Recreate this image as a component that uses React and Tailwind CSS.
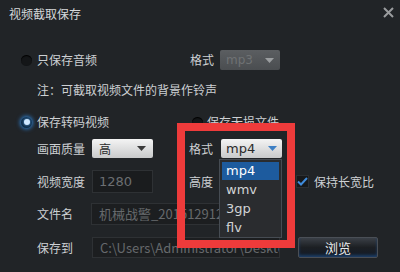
import React from 'react';

const cjk = { fontFamily: '"Noto Sans CJK SC", "Noto Sans", sans-serif' };

const Radio = ({ checked }) =>
  checked ? (
    <span className="flex h-[11px] w-[11px] items-center justify-center rounded-full bg-[#0d2a44] shadow-[0_0_4px_1px_#2f7fd0]">
      <span className="h-[6px] w-[6px] rounded-full bg-[#cfe8ff] shadow-[0_0_3px_#6fb8ff]" />
    </span>
  ) : (
    <span className="h-[11px] w-[11px] rounded-full bg-[#141618] shadow-[inset_0_1px_1px_#000]" />
  );

const Caret = ({ color }) => (
  <svg width="9" height="5" viewBox="0 0 9 5">
    <path d="M0 0h9L4.5 5z" fill={color} />
  </svg>
);

const App = () => {
  const formats = ['mp4', 'wmv', '3gp', 'flv'];

  return (
    <div
      className="relative h-[272px] w-[400px] overflow-hidden bg-[#212427] text-[12px] leading-[16px] text-[#cdd0d3]"
      style={cjk}
    >
      {/* title bar */}
      <div className="flex h-[28px] items-start justify-between pl-[9px] pr-[6px] pt-[6px]">
        <span className="text-[#d6d8da]">视频截取保存</span>
        <svg width="11" height="11" viewBox="0 0 11 11" className="mt-[1px]">
          <path d="M1 1l9 9M10 1l-9 9" stroke="#9a9c9e" strokeWidth="2" />
        </svg>
      </div>

      {/* audio only */}
      <div className="mt-[22px] flex h-[20px] items-center pl-[21px]">
        <div className="flex w-[169px] items-center gap-[5px]">
          <Radio />
          <span>只保存音频</span>
        </div>
        <span className="w-[30px]">格式</span>
        <div className="flex h-[20px] w-[60px] items-center justify-between rounded-[2px] bg-gradient-to-b from-[#5b5e61] to-[#4a4d50] px-[6px] text-[#6f7274]">
          <span style={{ fontFamily: '"DejaVu Sans", sans-serif' }}>mp3</span>
          <Caret color="#9b9ea0" />
        </div>
      </div>

      <div className="mt-[12px] h-[16px] pl-[37px]">注：可截取视频文件的背景作铃声</div>

      {/* transcode / lossless */}
      <div className="mt-[16px] flex h-[16px] items-center pl-[21px]">
        <div className="flex w-[171px] items-center gap-[5px]">
          <Radio checked />
          <span>保存转码视频</span>
        </div>
        <div className="flex items-center gap-[4px]">
          <Radio />
          <span>保存无损文件</span>
        </div>
      </div>

      {/* form rows */}
      <div className="mt-[9px] flex flex-col pl-[37px]">
        <div className="flex h-[19px] items-center">
          <span className="w-[55px]">画面质量</span>
          <div className="flex h-[19px] w-[61px] items-center justify-between rounded-[2px] bg-gradient-to-b from-[#f4f4f4] to-[#c9cacb] px-[7px] text-[#2a2a2a]">
            <span>高</span>
            <Caret color="#3a3a3a" />
          </div>
          <span className="ml-[36px] w-[32px]">格式</span>
          <div className="flex h-[19px] w-[61px] items-center justify-between rounded-[2px] bg-gradient-to-b from-[#f4f4f4] to-[#c9cacb] px-[5px] text-[#2a2a2a]">
            <span className="text-[13px]" style={{ fontFamily: '"DejaVu Sans", sans-serif' }}>
              mp4
            </span>
            <Caret color="#3d7fc4" />
          </div>
        </div>

        <div className="mt-[12px] flex h-[23px] items-center">
          <span className="w-[55px]">视频宽度</span>
          <div className="flex h-[23px] w-[61px] items-center border border-[#2e3134] bg-[#1a1c1e] px-[6px] text-[13px] text-[#6c6f72]" style={{ fontFamily: '"DejaVu Sans", sans-serif' }}>
            1280
          </div>
          <span className="ml-[36px] w-[32px]">高度</span>
          <div className="h-[23px] w-[61px] border border-[#2e3134] bg-[#1a1c1e]" />
          <div className="ml-[14px] flex items-center gap-[5px]">
            <span className="flex h-[13px] w-[13px] items-center justify-center bg-[#17191b] shadow-[inset_0_0_0_1px_#2c2f32]">
              <svg width="11" height="9" viewBox="0 0 11 9">
                <path d="M1 4.5l3 3L10 1" stroke="#3f8bdb" strokeWidth="2" fill="none" />
              </svg>
            </span>
            <span>保持长宽比</span>
          </div>
        </div>

        <div className="mt-[10px] flex h-[22px] items-center">
          <span className="w-[54px]">文件名</span>
          <div className="flex h-[22px] w-[189px] items-center overflow-hidden whitespace-nowrap border border-[#2e3134] bg-[#1c1e20] px-[7px] text-[13px] text-[#66696c]">
            机械战警_20151291211
          </div>
        </div>

        <div className="mt-[12px] flex h-[21px] items-center">
          <span className="w-[55px]">保存到</span>
          <div className="flex h-[21px] w-[188px] items-center overflow-hidden whitespace-nowrap border border-[#2e3134] bg-[#1c1e20] px-[7px] text-[13px] text-[#66696c]">
            C:\Users\Administrator\Desktop
          </div>
          <button className="ml-[18px] flex h-[21px] w-[80px] items-center justify-center rounded-[2px] border border-[#4a4f56] bg-gradient-to-b from-[#3b4047] via-[#1c1f23] to-[#111a27] text-[13px] text-[#e8eaec] shadow-[inset_0_-2px_3px_#1d3e66]">
            浏览
          </button>
        </div>
      </div>

      {/* open format list */}
      <div className="absolute left-[219px] top-[159px] flex h-[79px] w-[63px] flex-col border border-[#464c53] bg-[#2a2c2f] pt-[2px] text-[13px] leading-[18px]" style={{ fontFamily: '"DejaVu Sans", sans-serif' }}>
        {formats.map((f, i) => (
          <div
            key={f}
            className={
              i === 0
                ? 'mx-[2px] h-[18px] bg-[#1d5b9e] px-[4px] text-white'
                : 'mx-[2px] h-[19px] px-[4px] pt-[1px] text-[#d2d4d6]'
            }
          >
            {f}
          </div>
        ))}
      </div>

      {/* red highlight annotation */}
      <div className="absolute left-[177px] top-[123px] h-[125px] w-[118px] border-[8px] border-[#ee3b3b]" />
    </div>
  );
};

export default App;
